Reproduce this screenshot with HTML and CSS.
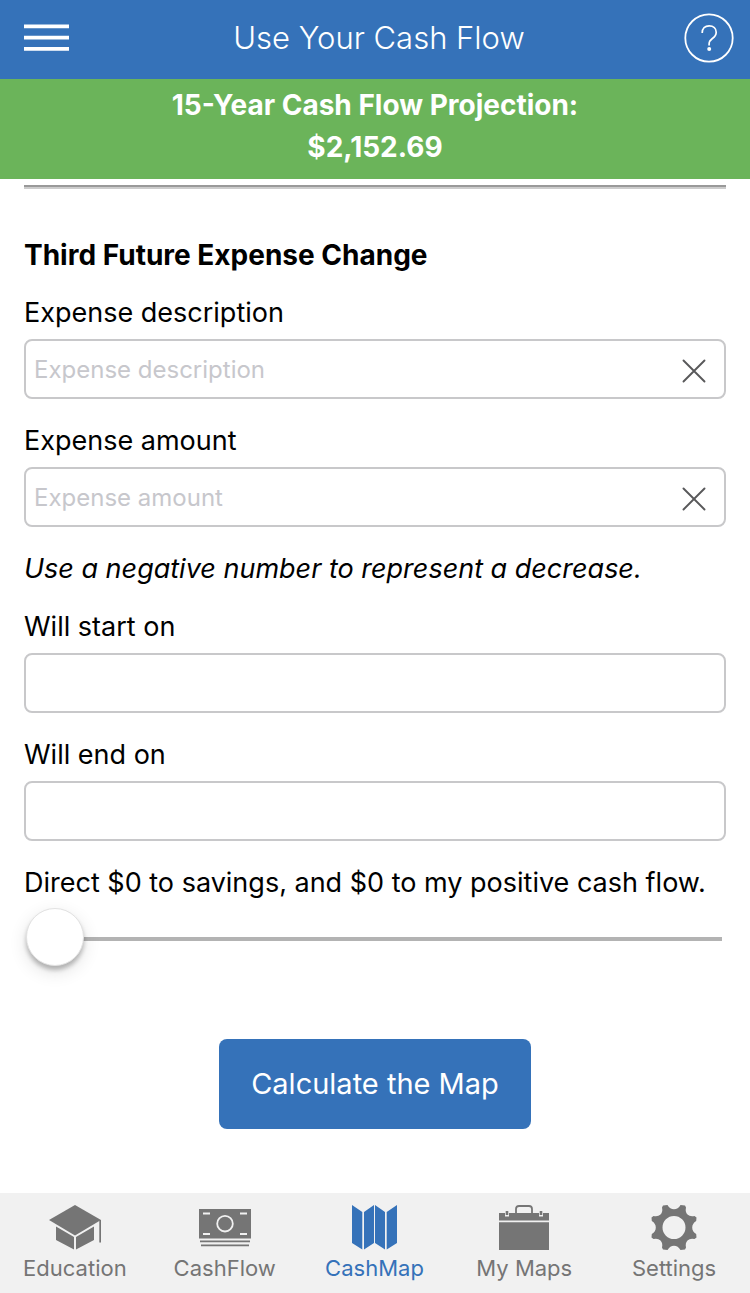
FILE: index.html
```html
<!DOCTYPE html>
<html lang="en">
<head>
<meta charset="utf-8">
<meta name="viewport" content="width=device-width, initial-scale=1">
<title>Use Your Cash Flow</title>
<link rel="stylesheet" href="styles.css">
</head>
<body class="app">
<header class="topbar">
  <button class="icon-button" type="button" aria-label="Menu">
    <svg width="45" height="28" viewBox="0 0 45 28" fill="#fff"><path d="M0 0.500h45v3.800H0zM0 11.700h45v3.800H0zM0 23h45v3.800H0z"/></svg>
  </button>
  <h1 class="title">Use Your Cash Flow</h1>
  <button class="icon-button help" type="button" aria-label="Help">
    <svg width="50" height="50" viewBox="0 0 50 50" fill="none" stroke="#fff"><circle cx="25" cy="25" r="23.700" stroke-width="1.800"/><path d="M18.200 20c0-4.500 2.800-7.200 7-7.200s7 2.600 7 6.400c0 3-1.500 4.700-3.800 6.300-2.500 1.800-3.300 3-3.300 5.500v1.400" stroke-width="1.700"/><circle cx="25.200" cy="36" r="2" fill="#fff" stroke="none"/></svg>
  </button>
</header>
<section class="projection">
  <p>15-Year Cash Flow Projection:</p>
  <p>$2,152.69</p>
</section>
<main class="content">
  <hr class="divider">
  <form class="form">
    <h2 class="heading">Third Future Expense Change</h2>
    <div class="field">
      <label for="description">Expense description</label>
      <div class="control">
        <input id="description" type="text" placeholder="Expense description">
        <button class="clear" type="button" aria-label="Clear description"><svg width="24" height="24" viewBox="0 0 24 24" stroke="#58585a" stroke-width="1.900" stroke-linecap="round"><path d="M1.500 1.500l21 21M22.500 1.500l-21 21"/></svg></button>
      </div>
    </div>
    <div class="field">
      <label for="amount">Expense amount</label>
      <div class="control">
        <input id="amount" type="text" placeholder="Expense amount">
        <button class="clear" type="button" aria-label="Clear amount"><svg width="24" height="24" viewBox="0 0 24 24" stroke="#58585a" stroke-width="1.900" stroke-linecap="round"><path d="M1.500 1.500l21 21M22.500 1.500l-21 21"/></svg></button>
      </div>
    </div>
    <p class="hint">Use a negative number to represent a decrease.</p>
    <div class="field">
      <label for="start">Will start on</label>
      <div class="control"><input id="start" type="text"></div>
    </div>
    <div class="field">
      <label for="end">Will end on</label>
      <div class="control"><input id="end" type="text"></div>
    </div>
    <div class="field">
      <label for="split">Direct $0 to savings, and $0 to my positive cash flow.</label>
      <input class="slider" id="split" type="range" min="0" max="100" value="0">
    </div>
    <button class="submit" type="button">Calculate the Map</button>
  </form>
</main>
<nav class="tabs">
  <a class="tab" href="#education">
    <svg width="52" height="45" viewBox="0 0 52 45" fill="currentColor"><path d="M26 0l26 15-26 15.500L0 15z"/><path d="M7 21.500l18 10.500V44.500L7 35zM45 21.500L27 32V44.500l18-9.500z"/><path d="M50.300 15H52v22.500h-1.700z"/></svg>
    <span>Education</span>
  </a>
  <a class="tab" href="#cashflow">
    <svg width="54" height="45" viewBox="0 0 54 45"><path d="M1 4h52v29.500H1z" fill="currentColor"/><g fill="none" stroke="#f1f1f1" stroke-width="1.800"><circle cx="27" cy="18.700" r="7.800"/><path d="M5 8.500h7M42 8.500h7M5 29h7M42 29h7"/></g><path d="M2 35.500h50v1.700H2zM3 39.500h48v1.700H3z" fill="currentColor"/></svg>
    <span>CashFlow</span>
  </a>
  <a class="tab active" href="#cashmap" aria-current="page">
    <svg width="45" height="45" viewBox="0 0 45 45" fill="currentColor"><path d="M0 0l10.300 7v37.500L0 38zM12 7l10-7v38l-10 6.500zM23 0l10 7v37.500L23 38zM34.700 7L45 0v38l-10.300 6.500z"/></svg>
    <span>CashMap</span>
  </a>
  <a class="tab" href="#maps">
    <svg width="50" height="45" viewBox="0 0 50 45" fill="currentColor"><path d="M0 8h6v3.500h4V8h30v3.500h4V8h6v7.500H0zM0 17.200h50V45H0z"/><path d="M6.700 6h2.600v4H6.700zM40.700 6h2.600v4h-2.600z"/><path d="M17 8.500V4q0-3 3-3h10q3 0 3 3v4.500" fill="none" stroke="currentColor" stroke-width="1.800"/></svg>
    <span>My Maps</span>
  </a>
  <a class="tab" href="#settings">
    <svg width="46" height="45" viewBox="0 0 46 45"><path fill="currentColor" fill-rule="evenodd" d="M12 .500l4.500-.5q2.500 4.300 6.500 4.300T29.500 0L34 .500l1 2q-1 4.500 1.500 7t7 1.500l2 1.500-.3 3.500q-4 2.500-4 6.500t4 6.500l.3 3.500-2 1.500q-4.500-1-7 1.500t-1.500 7l-1 2-4.500.5q-2.500-4.300-6.500-4.300T16.500 45l-4.500-.5-1-2q1-4.500-1.500-7t-7-1.500l-2-1.500.3-3.500q4-2.500 4-6.500t-4-6.500L.500 12.500l2-1.500q4.500 1 7-1.500t1.500-7zM23 11a11.500 11.500 0 100 23 11.500 11.500 0 000-23z"/></svg>
    <span>Settings</span>
  </a>
</nav>
</body>
</html>
```
FILE: styles.css
```css
* { box-sizing: border-box; }

.app {
  margin: 0;
  min-height: 100vh;
  display: flex;
  flex-direction: column;
  background: #fff;
  color: #000;
  font: 400 27px/42px Inter, sans-serif;
}

h1, h2, p { margin: 0; }
svg { display: block; }
button { font: inherit; cursor: pointer; }

.topbar {
  display: grid;
  grid-template-columns: 50px 1fr 50px;
  align-items: center;
  height: 79px;
  padding: 0 16px 4px 24px;
  background: #3572b9;
  color: #fff;
}
.icon-button { padding: 0; border: 0; background: none; }
.title {
  font-size: 31px;
  font-weight: 300;
  text-align: center;
}

.projection {
  padding: 5px 24px 11px;
  background: #6bb45a;
  color: #fff;
  font-size: 28px;
  font-weight: 700;
  text-align: center;
}

.content {
  flex: 1;
  padding: 6px 24px 24px;
}
.divider {
  height: 4px;
  margin: 0;
  border: 0;
  border-top: 2px solid #999;
  background: #ccc;
}
.form {
  display: flex;
  flex-direction: column;
  gap: 21px;
  padding-top: 45px;
}
.heading {
  margin-bottom: -5px;
  font-size: 28px;
  font-weight: 700;
}
.field {
  display: flex;
  flex-direction: column;
  gap: 5px;
}
.control {
  display: flex;
  align-items: center;
  height: 60px;
  padding: 0 18px 0 8px;
  border: 2px solid #c8c8ca;
  border-radius: 8px;
}
.control input {
  flex: 1;
  min-width: 0;
  height: 100%;
  padding: 0;
  border: 0;
  outline: 0;
  background: none;
  font: inherit;
  font-size: 24px;
}
.control input::placeholder { color: #c7c7cc; opacity: 1; }
.clear {
  padding: 4px 0 0;
  border: 0;
  background: none;
}
.hint {
  margin-bottom: -5px;
  font-style: italic;
}

.slider {
  appearance: none;
  width: 100%;
  height: 60px;
  margin: 0;
  padding: 0 2px;
  background: linear-gradient(#b3b3b3, #b3b3b3) center / calc(100% - 8px) 4px no-repeat;
}
.slider::-webkit-slider-thumb {
  appearance: none;
  width: 58px;
  height: 58px;
  margin-bottom: 4px;
  border: 1px solid #e2e2e2;
  border-radius: 50%;
  background: #fff;
  box-shadow: 0 4px 4px rgba(0, 0, 0, 0.24), 0 6px 18px rgba(0, 0, 0, 0.12);
}

.submit {
  align-self: center;
  height: 90px;
  margin-top: 49px;
  padding: 0 32px;
  border: 0;
  border-radius: 8px;
  background: #3572b9;
  color: #fff;
  font-size: 29px;
}

.tabs {
  display: grid;
  grid-template-columns: repeat(5, 1fr);
  padding: 12px 1px 11px 0;
  background: #f1f1f1;
}
.tab {
  display: flex;
  flex-direction: column;
  align-items: center;
  gap: 4px;
  color: #757575;
  font-size: 22px;
  line-height: 28px;
  text-decoration: none;
}
.active { color: #3572b9; }
```
